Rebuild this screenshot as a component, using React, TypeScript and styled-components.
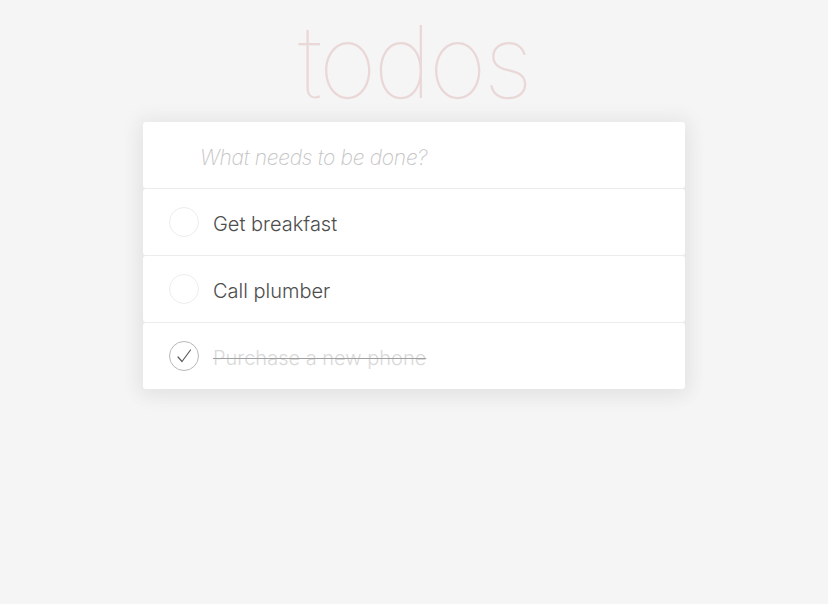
import styled, { createGlobalStyle } from 'styled-components';

const GlobalStyle = createGlobalStyle`
  html, body {
    margin: 0;
    padding: 0;
    background: #f5f5f5;
    font-family: "Inter", "Liberation Sans", Arial, sans-serif;
    color: #4d4d4d;
  }
`;

const Page = styled.div`
  width: 828px;
  min-height: 604px;
  display: flex;
  flex-direction: column;
  align-items: center;
`;

const Title = styled.h1`
  margin: 4px 0 0;
  font-family: "Inter", "Liberation Sans", sans-serif;
  font-size: 100px;
  font-weight: 100;
  line-height: 116px;
  letter-spacing: -3px;
  color: rgba(175, 47, 47, 0.15);
  text-align: center;
`;

const Stack = styled.section`
  width: 542px;
  margin-top: 2px;
  display: flex;
  flex-direction: column;
  gap: 1px;
  background: #ececec;
  border-radius: 3px;
  box-shadow: 0 0 18px 8px rgba(0, 0, 0, 0.035), 0 6px 24px rgba(0, 0, 0, 0.05);
`;

const Card = styled.div`
  height: 66px;
  background: #fff;
  border-radius: 3px;
  display: flex;
  align-items: center;
  box-sizing: border-box;
`;

const NewTodo = styled.input`
  width: 100%;
  height: 100%;
  border: 0;
  outline: none;
  background: transparent;
  padding: 4px 0 0 57px;
  box-sizing: border-box;
  font-family: "Inter", "Liberation Sans", Arial, sans-serif;
  font-size: 21px;
  color: #4d4d4d;

  &::placeholder {
    font-style: italic;
    font-weight: 200;
    letter-spacing: -0.3px;
    color: #c4c4c4;
  }
`;

const Toggle = styled.span<{ $done?: boolean }>`
  width: 28px;
  height: 28px;
  margin: 0 14px 0 26px;
  border-radius: 50%;
  border: 1px solid ${({ $done }) => ($done ? '#b8b8b8' : '#ededed')};
  display: flex;
  align-items: center;
  justify-content: center;
  flex-shrink: 0;
`;

const Label = styled.span<{ $done?: boolean }>`
  padding-top: 3px;
  font-family: "Inter", "Liberation Sans", Arial, sans-serif;
  font-size: 20px;
  font-weight: 300;
  letter-spacing: 0;
  color: ${({ $done }) => ($done ? '#d9d9d9' : '#4d4d4d')};
  text-decoration: ${({ $done }) => ($done ? 'line-through' : 'none')};
  text-decoration-color: #a0a0a0;
  text-decoration-thickness: 1px;
`;

const todos = [
  { text: 'Get breakfast', done: false },
  { text: 'Call plumber', done: false },
  { text: 'Purchase a new phone', done: true },
];

const Check = () => (
  <svg width="18" height="18" viewBox="0 0 18 18" fill="none">
    <path d="M3 10 L7 14.5 L15.5 3" stroke="#5b5b5b" strokeWidth="1.2" strokeLinecap="round" strokeLinejoin="round" />
  </svg>
);

const App = () => {
  return (
    <Page>
      <GlobalStyle />
      <Title>todos</Title>
      <Stack>
        <Card>
          <NewTodo placeholder="What needs to be done?" />
        </Card>
        {todos.map((t) => (
          <Card key={t.text}>
            <Toggle $done={t.done}>{t.done && <Check />}</Toggle>
            <Label $done={t.done}>{t.text}</Label>
          </Card>
        ))}
      </Stack>
    </Page>
  );
};

export default App;
